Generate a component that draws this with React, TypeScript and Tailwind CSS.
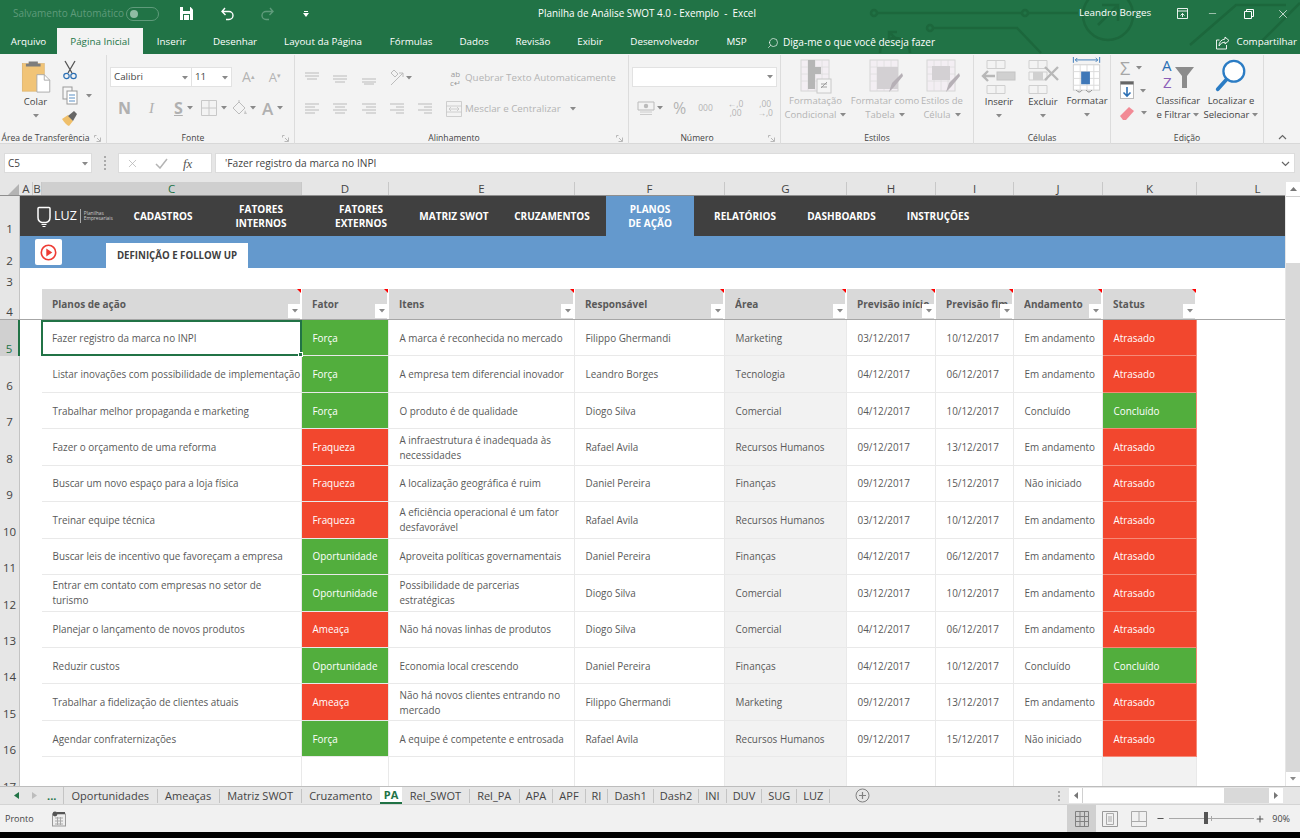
import React from "react";
import { Search, X, Minus, Plus } from "lucide-react";

const GRID = "grid grid-cols-[20px_13px_9px_260px_87px_186px_150px_122px_89px_78px_89px_94px_122px]";

type R = { n: number; a: string; f: string; i: string; r: string; s: string; d1: string; d2: string; and: string; st: string };
const rows: R[] = [
  { n: 5, a: "Fazer registro da marca no INPI", f: "Força", i: "A marca é reconhecida no mercado", r: "Filippo Ghermandi", s: "Marketing", d1: "03/12/2017", d2: "10/12/2017", and: "Em andamento", st: "Atrasado" },
  { n: 6, a: "Listar inovações com possibilidade de implementação", f: "Força", i: "A empresa tem diferencial inovador", r: "Leandro Borges", s: "Tecnologia", d1: "04/12/2017", d2: "06/12/2017", and: "Em andamento", st: "Atrasado" },
  { n: 7, a: "Trabalhar melhor propaganda e marketing", f: "Força", i: "O produto é de qualidade", r: "Diogo Silva", s: "Comercial", d1: "04/12/2017", d2: "10/12/2017", and: "Concluído", st: "Concluído" },
  { n: 8, a: "Fazer o orçamento de uma reforma", f: "Fraqueza", i: "A infraestrutura é inadequada às\nnecessidades", r: "Rafael Avila", s: "Recursos Humanos", d1: "09/12/2017", d2: "13/12/2017", and: "Em andamento", st: "Atrasado" },
  { n: 9, a: "Buscar um novo espaço para a loja física", f: "Fraqueza", i: "A localização geográfica é ruim", r: "Daniel Pereira", s: "Finanças", d1: "09/12/2017", d2: "15/12/2017", and: "Não iniciado", st: "Atrasado" },
  { n: 10, a: "Treinar equipe técnica", f: "Fraqueza", i: "A eficiência operacional é um fator\ndesfavorável", r: "Rafael Avila", s: "Recursos Humanos", d1: "03/12/2017", d2: "10/12/2017", and: "Em andamento", st: "Atrasado" },
  { n: 11, a: "Buscar leis de incentivo que favoreçam a empresa", f: "Oportunidade", i: "Aproveita políticas governamentais", r: "Daniel Pereira", s: "Finanças", d1: "04/12/2017", d2: "06/12/2017", and: "Em andamento", st: "Atrasado" },
  { n: 12, a: "Entrar em contato com empresas no setor de\nturismo", f: "Oportunidade", i: "Possibilidade de parcerias\nestratégicas", r: "Diogo Silva", s: "Comercial", d1: "03/12/2017", d2: "10/12/2017", and: "Em andamento", st: "Atrasado" },
  { n: 13, a: "Planejar o lançamento de novos produtos", f: "Ameaça", i: "Não há novas linhas de produtos", r: "Diogo Silva", s: "Comercial", d1: "04/12/2017", d2: "06/12/2017", and: "Em andamento", st: "Atrasado" },
  { n: 14, a: "Reduzir custos", f: "Oportunidade", i: "Economia local crescendo", r: "Daniel Pereira", s: "Finanças", d1: "04/12/2017", d2: "10/12/2017", and: "Concluído", st: "Concluído" },
  { n: 15, a: "Trabalhar a fidelização de clientes atuais", f: "Ameaça", i: "Não há novos clientes entrando no\nmercado", r: "Filippo Ghermandi", s: "Marketing", d1: "09/12/2017", d2: "13/12/2017", and: "Em andamento", st: "Atrasado" },
  { n: 16, a: "Agendar confraternizações", f: "Força", i: "A equipe é competente e entrosada", r: "Rafael Avila", s: "Recursos Humanos", d1: "09/12/2017", d2: "15/12/2017", and: "Não iniciado", st: "Atrasado" },
];

const GREEN = "bg-[#52ae3d] text-white";
const RED = "bg-[#f2472e] text-white";
const colorOf = (v: string) => (v === "Força" || v === "Oportunidade" || v === "Concluído" ? GREEN : RED);

function Caret({ className = "" }: { className?: string }) {
  return (
    <svg width="6" height="4" viewBox="0 0 6 4" className={className}>
      <path d="M0 0h6L3 3.500z" fill="#8a8a8a" />
    </svg>
  );
}

function Launcher() {
  return (
    <svg width="7" height="7" viewBox="0 0 7 7" className="absolute right-[5px] bottom-[2px]">
      <path d="M0.5 0.5h2M0.5 0.5v2M6.5 6.5h-4M6.5 6.5v-4M3 3l3 3" stroke="#a8a8a8" strokeWidth="0.8" fill="none" />
    </svg>
  );
}

function Group({ w, label, launcher, children }: { w: string; label: string; launcher?: boolean; children?: React.ReactNode }) {
  return (
    <div className={`relative flex flex-col border-r border-[#dcdcdc] h-[89px] ${w}`}>
      <div className="flex-1 flex min-h-0">{children}</div>
      <div className={`h-[11px] text-center text-[8.6px] leading-[11px] text-[#444] whitespace-nowrap ${launcher ? "pr-[15px]" : ""}`}>{label}</div>
      {launcher && <Launcher />}
    </div>
  );
}

function AlignIcon({ lines }: { lines: [number, number, number][] }) {
  return (
    <svg width="16" height="14" viewBox="0 0 16 14">
      {lines.map(([y, a, b], i) => (
        <path key={i} d={`M${a} ${y}H${b}`} stroke="#c4c4c4" strokeWidth="1.2" />
      ))}
    </svg>
  );
}

function Btn3({ w, l1, l2, children }: { w: string; l1: string; l2: string; children: React.ReactNode }) {
  return (
    <div className={`flex flex-col items-center ${w}`}>
      <div className="h-[39px] flex items-start justify-center pt-[4px]">{children}</div>
      <div className="text-[9.5px] leading-[14px] text-center whitespace-nowrap text-[#b4b4b4]">{l1}</div>
      <div className="text-[9.5px] leading-[14px] flex items-center justify-center gap-[4px] whitespace-nowrap text-[#b4b4b4]">
        {l2}
        <Caret />
      </div>
    </div>
  );
}

function StyleIcon({ kind }: { kind: number }) {
  return (
    <svg width="36" height="36" viewBox="0 0 36 36">
      <rect x="3" y="1" width="28" height="31" fill="#f3eef3" stroke="#d6d6d6" />
      <path d="M3 8h28M3 15h28M3 22h28M10 1v31M17 1v31M24 1v31" stroke="#ddd" strokeWidth="0.8" />
      {kind === 0 && <path d="M10 1h7v7h6v7h-6v15h-7z" fill="#b6b6b6" />}
      {kind === 0 && <rect x="19" y="20" width="14" height="14" fill="#f5f5f5" stroke="#c8c8c8" />}
      {kind === 0 && <path d="M23 29l6-6M23 25h6M23 28h6" stroke="#999" strokeWidth="0.9" />}
      {kind === 1 && <rect x="10" y="8" width="21" height="22" fill="#d3d0d3" />}
      {kind === 2 && <rect x="8" y="7" width="18" height="14" fill="#d3d0d3" />}
      {kind > 0 && <path d="M22 33l3-9 10-10 1 3-9 11z" fill="#b6b0b6" />}
    </svg>
  );
}

function Ribbon() {
  return (
    <div className="h-[90px] bg-[#f3f3f3] flex items-start pt-[1px] border-b border-[#d8d8d8]">
      <Group w="w-[107px]" label="Área de Transferência" launcher>
        <div className="w-[58px] flex flex-col items-center pl-[13px] pt-[5px]">
          <svg width="32" height="33" viewBox="0 0 32 36">
            <rect x="1" y="4" width="24" height="30" fill="#f1c477" stroke="#d8a95c" strokeWidth="0.6" />
            <path d="M8 4V1.5h10V4h3v3H5V4z" fill="#7d7d7d" />
            <path d="M17 16h8l6 6v13H17z" fill="#fff" stroke="#a8a8a8" />
            <path d="M25 16v6h6" fill="none" stroke="#a8a8a8" />
          </svg>
          <span className="text-[9.5px] leading-[14px] text-[#444] mt-[2px]">Colar</span>
          <Caret className="mt-[5px]" />
        </div>
        <div className="flex flex-col pl-[4px] pt-[5px] gap-[6px]">
          <svg width="16" height="20" viewBox="0 0 16 20">
            <path d="M3 1l7 12M13 1L6 13" stroke="#555" strokeWidth="1.3" />
            <circle cx="4.5" cy="16" r="2.7" fill="none" stroke="#2b6fb3" strokeWidth="1.2" />
            <circle cx="11.5" cy="16" r="2.7" fill="none" stroke="#2b6fb3" strokeWidth="1.2" />
          </svg>
          <div className="flex items-center gap-[8px]">
            <svg width="16" height="19" viewBox="0 0 16 19">
              <rect x="1" y="1" width="9" height="12" fill="#f6f6f6" stroke="#999" />
              <rect x="5" y="5" width="10" height="13" fill="#fff" stroke="#999" />
              <path d="M7 9h6M7 12h6M7 15h6" stroke="#5a8fc4" />
            </svg>
            <Caret />
          </div>
          <svg width="15" height="16" viewBox="0 0 15 16">
            <path d="M0 8l6-4 5 6-4 5q-3-1-7-7z" fill="#efbf6a" />
            <path d="M6 5l6-5 3 3-4 7z" fill="#666" />
          </svg>
        </div>
      </Group>
      <Group w="w-[188px]" label="Fonte" launcher>
        <div className="flex flex-col pl-[3px] pt-[12px] w-full">
          <div className="flex items-center h-[20px]">
            <div className="w-[82px] h-[20px] pt-[1px] bg-white border border-[#e2e2e2] flex items-center justify-between px-[3px] text-[9.8px] text-[#444]">
              Calibri <Caret />
            </div>
            <div className="w-[40px] h-[20px] pt-[1px] bg-white border border-[#e2e2e2] border-l-0 flex items-center justify-between px-[3px] text-[9.8px] text-[#444]">
              11 <Caret />
            </div>
            <span className="ml-[10px] text-[14px] text-[#b4b4b4] leading-none">A<sup className="text-[7px]">▴</sup></span>
            <span className="ml-[14px] text-[13px] text-[#b4b4b4] leading-none">A<sup className="text-[7px]">▾</sup></span>
          </div>
          <div className="flex items-center h-[20px] mt-[11px] pl-[8px] text-[#b0b0b0]">
            <span className="w-[31px] text-[16px] font-bold leading-none">N</span>
            <span className="w-[25px] text-[15px] italic leading-none font-['Liberation_Serif',serif]">I</span>
            <span className="w-[13px] text-[16px] font-bold underline leading-none">S</span>
            <Caret />
            <svg width="16" height="16" viewBox="0 0 16 16" className="ml-[8px]"><path d="M.5.5h15v15H.5zM8 .5v15M.5 8h15" fill="none" stroke="#c8c8c8" /></svg>
            <Caret className="ml-[4px]" />
            <svg width="16" height="16" viewBox="0 0 16 16" className="ml-[4px]"><path d="M2 8l6-6 6 6-6 6zM8 2V0" fill="none" stroke="#bcbcbc" /><path d="M14 10l2 4h-3z" fill="#c8c8c8" /></svg>
            <Caret className="ml-[3px]" />
            <span className="ml-[6px] text-[17px] font-semibold leading-none">A</span>
            <Caret className="ml-[4px]" />
          </div>
        </div>
      </Group>
      <Group w="w-[334px]" label="Alinhamento" launcher>
        <div className="flex flex-col pl-[9px] pt-[12px] w-full">
          <div className="flex items-center h-[22px]">
            <div className="w-[28px]"><AlignIcon lines={[[2, 1, 15], [5, 1, 15], [8, 3, 13]]} /></div>
            <div className="w-[29px]"><AlignIcon lines={[[5, 1, 15], [8, 1, 15], [11, 3, 13]]} /></div>
            <div className="w-[28px]"><AlignIcon lines={[[8, 1, 15], [11, 1, 15], [13, 3, 13]]} /></div>
            <svg width="16" height="16" viewBox="0 0 16 16"><path d="M2 15L14 3M10 3h4v4M2 3l4 4 3-3-4-4z" fill="none" stroke="#bcbcbc" /></svg>
            <Caret className="ml-[1px]" />
            <div className="ml-[36px] w-[15px] flex flex-col items-center text-[8px] leading-[9px] text-[#9a9a9a]"><span>ab</span><span>c↵</span></div>
            <span className="ml-[2px] text-[9.8px] text-[#b4b4b4] whitespace-nowrap">Quebrar Texto Automaticamente</span>
          </div>
          <div className="flex items-center h-[22px] mt-[9px]">
            <div className="w-[28px]"><AlignIcon lines={[[2, 1, 15], [5, 1, 11], [8, 1, 15], [11, 1, 11]]} /></div>
            <div className="w-[29px]"><AlignIcon lines={[[2, 1, 15], [5, 3, 13], [8, 1, 15], [11, 3, 13]]} /></div>
            <div className="w-[28px]"><AlignIcon lines={[[2, 1, 15], [5, 5, 15], [8, 1, 15], [11, 5, 15]]} /></div>
            <div className="w-[28px]"><AlignIcon lines={[[2, 1, 15], [5, 7, 15], [8, 1, 15], [11, 7, 15]]} /></div>
            <div className="w-[28px]"><AlignIcon lines={[[2, 1, 15], [5, 7, 15], [8, 1, 15], [11, 7, 15]]} /></div>
            <svg width="16" height="16" viewBox="0 0 16 16" className="ml-[1px]"><path d="M.5.5h15v15H.5zM.5 5h15M.5 11h15M3 8h10M3 8l2-2M3 8l2 2M13 8l-2-2M13 8l-2 2" fill="none" stroke="#c4c4c4" strokeWidth="0.8" /></svg>
            <span className="ml-[3px] text-[9.8px] text-[#b4b4b4] whitespace-nowrap">Mesclar e Centralizar</span>
            <Caret className="ml-[9px]" />
          </div>
        </div>
      </Group>
      <Group w="w-[152px]" label="Número" launcher>
        <div className="flex flex-col pl-[3px] pt-[12px] w-full">
          <div className="w-[145px] h-[20px] bg-white border border-[#e2e2e2] flex items-center justify-end pr-[3px]"><Caret /></div>
          <div className="flex items-center h-[20px] mt-[11px] pl-[5px] text-[#b4b4b4]">
            <svg width="18" height="15" viewBox="0 0 18 15"><path d="M1 1h16v8H1z" fill="none" stroke="#bbb" /><circle cx="9" cy="5" r="2.2" fill="#bbb" /><path d="M3 11h12M3 13.5h12" stroke="#ccc" /></svg>
            <Caret className="ml-[2px]" />
            <span className="ml-[10px] text-[16px] leading-none">%</span>
            <span className="ml-[12px] text-[8.5px]">000</span>
            <span className="ml-[15px] text-[8.5px] leading-[9px] text-center">←,0<br />,00</span>
            <span className="ml-[14px] text-[8.5px] leading-[9px] text-center">,00<br />→,0</span>
          </div>
        </div>
      </Group>
      <Group w="w-[193px]" label="Estilos">
        <div className="flex pl-[4px] w-full">
          <Btn3 w="w-[61px]" l1="Formatação" l2="Condicional"><StyleIcon kind={0} /></Btn3>
          <Btn3 w="w-[70px] ml-[4px]" l1="Formatar como" l2="Tabela"><StyleIcon kind={1} /></Btn3>
          <Btn3 w="w-[44px]" l1="Estilos de" l2="Célula"><StyleIcon kind={2} /></Btn3>
        </div>
      </Group>
      <Group w="w-[137px]" label="Células">
        <div className="flex pl-[3px] w-full">
          <div className="w-[44px] flex flex-col items-center">
            <svg width="36" height="36" viewBox="0 0 36 36" className="mt-[4px]">
              <path d="M6 1.5h18v8H6zM15 1.5v8M6 26.5h18v8H6zM15 26.5v8" fill="none" stroke="#cfcfcf" />
              <rect x="16" y="13" width="18" height="8" fill="#d0d0d0" stroke="#c4c4c4" />
              <path d="M14 17H2M7 12l-5 5 5 5" fill="none" stroke="#b8b8b8" strokeWidth="2.4" />
            </svg>
            <span className="text-[9.5px] leading-[14px] text-[#444]">Inserir</span>
            <Caret className="mt-[5px]" />
          </div>
          <div className="w-[44px] flex flex-col items-center">
            <svg width="36" height="36" viewBox="0 0 36 36" className="mt-[4px]">
              <path d="M4 1.5h18v8H4zM13 1.5v8M4 26.5h18v8H4zM13 26.5v8M4 13h18v8H4z" fill="none" stroke="#cfcfcf" />
              <rect x="8" y="13" width="10" height="8" fill="#d0d0d0" />
              <path d="M20 8l13 13M33 8L20 21" stroke="#b8b8b8" strokeWidth="2.4" />
            </svg>
            <span className="text-[9.5px] leading-[14px] text-[#444]">Excluir</span>
            <Caret className="mt-[5px]" />
          </div>
          <div className="w-[44px] flex flex-col items-center">
            <svg width="34" height="37" viewBox="0 0 34 38" className="mt-[2px]">
              <path d="M3 0v6M30 0v6M5 3h23M5 3l2-2M5 3l2 2M28 3l-2-2M28 3l-2 2" stroke="#2b6fb3" fill="none" strokeWidth="0.9" />
              <rect x="3" y="8" width="27" height="26" fill="#fff" stroke="#cfcfcf" />
              <path d="M3 15h27M3 22h27M3 29h27M10 8v26M17 8v26M24 8v26" stroke="#dcdcdc" />
              <rect x="11" y="15" width="9" height="13" fill="#3f78b8" />
              <path d="M6 34q3 4 6 0M16 34q3 4 6 0" fill="none" stroke="#888" />
            </svg>
            <span className="text-[9.5px] leading-[14px] text-[#444]">Formatar</span>
            <Caret className="mt-[5px]" />
          </div>
        </div>
      </Group>
      <Group w="w-[153px]" label="Edição">
        <div className="flex w-full">
          <div className="flex flex-col pl-[9px] w-[44px] pt-[4px] gap-[5px]">
            <div className="flex items-center gap-[6px] h-[17px]"><span className="text-[18px] leading-none text-[#a6a6a6]">Σ</span><Caret /></div>
            <div className="flex items-center gap-[3px] h-[19px]">
              <svg width="17" height="19" viewBox="0 0 17 19"><rect x=".5" y=".5" width="13" height="17" fill="#fff" stroke="#bbb" /><rect x=".5" y=".5" width="13" height="3" fill="#666" /><path d="M7 6v9M3.5 11.5L7 15l3.5-3.5" stroke="#2b6fb3" strokeWidth="1.6" fill="none" /></svg>
              <Caret />
            </div>
            <div className="flex items-center gap-[6px] h-[16px]">
              <svg width="15" height="15" viewBox="0 0 15 15"><path d="M0 10L9 1l5 4-8 9H3z" fill="#f28a95" /></svg>
              <Caret />
            </div>
          </div>
          <div className="w-[46px] flex flex-col items-center">
            <div className="relative w-[36px] h-[36px] mt-[3px]">
              <span className="absolute left-[2px] top-[-1px] text-[15px] leading-[17px] text-[#2b6fb3]">A</span>
              <span className="absolute left-[3px] top-[16px] text-[15px] leading-[17px] text-[#8c5eb8]">Z</span>
              <svg width="22" height="24" viewBox="0 0 22 24" className="absolute left-[14px] top-[8px]"><path d="M1 1h19l-7 9v12H8V10z" fill="#8c8c8c" /></svg>
            </div>
            <span className="text-[9.5px] leading-[14px] text-[#444]">Classificar</span>
            <span className="text-[9.5px] leading-[14px] text-[#444] flex items-center gap-[3px] whitespace-nowrap">e Filtrar <Caret /></span>
          </div>
          <div className="w-[56px] ml-[2px] flex flex-col items-center">
            <svg width="36" height="36" viewBox="0 0 36 38" className="mt-[3px]">
              <circle cx="21" cy="14" r="11" fill="#fff" stroke="#2b7cc4" strokeWidth="2.4" />
              <path d="M13 23L4 33" stroke="#2b7cc4" strokeWidth="4" strokeLinecap="round" />
            </svg>
            <span className="text-[9.5px] leading-[14px] text-[#444] whitespace-nowrap">Localizar e</span>
            <span className="text-[9.5px] leading-[14px] text-[#444] flex items-center gap-[3px] whitespace-nowrap">Selecionar <Caret /></span>
          </div>
        </div>
      </Group>
      <div className="flex-1 h-[88px] flex items-end justify-center pb-[3px]">
        <svg width="9" height="6" viewBox="0 0 9 6"><path d="M1 5l3.5-3.5L8 5" fill="none" stroke="#666" strokeWidth="1.2" /></svg>
      </div>
    </div>
  );
}

function Head({ t }: { t: string }) {
  return (
    <div className="relative h-[30px] bg-[#d9d9d9] border-r-2 border-white flex items-center pl-[10px] pt-[1px] text-[10px] font-bold text-[#595959] whitespace-nowrap">
      <span className="block w-full overflow-hidden">{t}</span>
      <span className="absolute -right-[1px] top-0 w-0 h-0 border-t-[4px] border-l-[4px] border-t-[#ff0000] border-l-transparent" />
      <span className="absolute -right-[2px] bottom-[1px] w-[14px] h-[14px] bg-white flex items-center justify-center">
        <Caret />
      </span>
    </div>
  );
}

function RowNum({ n, sel }: { n: number; sel?: boolean }) {
  return (
    <div className={`flex items-end justify-center pb-[1px] text-[11.5px] leading-[13px] ${sel ? "bg-[#d0d0d0] text-[#217346] border-r-2 border-[#217346]" : "bg-[#e6e6e6] text-[#444] border-r border-[#c4c4c4]"}`}>
      {n}
    </div>
  );
}

function Cell({ children, className = "" }: { children?: React.ReactNode; className?: string }) {
  return (
    <div className={`flex items-center pl-[10.5px] pt-[1px] text-[9.9px] leading-[15px] whitespace-pre border-r border-b border-[#e9e9e9] ${className}`}>
      {children}
    </div>
  );
}

function Nav({ w, t, active }: { w: string; t: string; active?: boolean }) {
  return (
    <div className={`${w} h-full flex items-center justify-center text-center text-white text-[10px] font-bold leading-[14px] whitespace-pre ${active ? "bg-[#6499cd]" : ""}`}>
      {t}
    </div>
  );
}

function Sheet() {
  const cols = ["C", "D", "E", "F", "G", "H", "I", "J", "K", "L"];
  return (
    <div className="relative w-[1285px] h-[604px] overflow-hidden bg-white">
      {/* column header */}
      <div className={`${GRID} h-[13px] bg-[#e6e6e6] text-[11.5px] leading-[13px] text-[#444] text-center`}>
        <div className="flex items-end justify-end pr-[1px]">
          <span className="w-0 h-0 border-b-[11px] border-l-[11px] border-b-[#b4b4b4] border-l-transparent" />
        </div>
        <div className="border-r border-[#c8c8c8]">A</div>
        <div className="border-r border-[#c8c8c8]">B</div>
        {cols.map((c) => (
          <div key={c} className={`border-r border-[#c8c8c8] ${c === "C" ? "bg-[#cfcfcf] text-[#217346]" : ""}`}>{c}</div>
        ))}
      </div>
      {/* row 1 */}
      <div className={`${GRID} h-[41px] border-t border-[#8f8f8f]`}>
        <RowNum n={1} />
        <div className="col-span-12 bg-[#404040] flex items-center">
          <div className="w-[100px] h-full flex items-center pl-[16px] gap-[2px] text-white shrink-0">
            <svg width="16" height="21" viewBox="0 0 16 21" className="shrink-0">
              <path d="M2 2.500q0-1 1-1h10q1 0 1 1v9q0 4-4 5H6q-4-1-4-5z" fill="none" stroke="#fff" strokeWidth="1.5" />
              <path d="M5.500 18.500h5M6.500 20.500h3" stroke="#fff" strokeWidth="1" />
            </svg>
            <span className="text-[12.5px] leading-none font-normal">LUZ</span>
            <span className="ml-[1px] w-px h-[14px] bg-[#aaa]" />
            <span className="ml-[1px] text-[4.8px] leading-[5.5px] text-[#ccc] whitespace-nowrap">Planilhas<br />Empresariais</span>
          </div>
          <Nav w="w-[86px]" t="CADASTROS" />
          <Nav w="w-[110px]" t={"FATORES\nINTERNOS"} />
          <Nav w="w-[90px]" t={"FATORES\nEXTERNOS"} />
          <Nav w="w-[96px]" t="MATRIZ SWOT" />
          <Nav w="w-[100px] mr-[4px]" t="CRUZAMENTOS" />
          <Nav w="w-[88px]" t={"PLANOS\nDE AÇÃO"} active />
          <Nav w="w-[102px]" t="RELATÓRIOS" />
          <Nav w="w-[91px]" t="DASHBOARDS" />
          <Nav w="w-[102px]" t="INSTRUÇÕES" />
        </div>
      </div>
      {/* row 2 */}
      <div className={`${GRID} h-[32px]`}>
        <RowNum n={2} />
        <div className="col-span-12 bg-[#6499cd] flex items-end">
          <div className="ml-[15px] mb-[3px] w-[27px] h-[26px] bg-white rounded-[2px] flex items-center justify-center">
            <svg width="17" height="17" viewBox="0 0 17 17">
              <circle cx="8.500" cy="8.500" r="7.200" fill="none" stroke="#ee3b34" strokeWidth="1.6" />
              <path d="M6.300 4.600l6 3.900-6 3.900z" fill="#ee3b34" />
            </svg>
          </div>
          <div className="ml-[44px] w-[142px] h-[25px] pt-[1px] bg-white flex items-center justify-center text-[9.7px] font-bold text-[#404040] whitespace-nowrap">
            DEFINIÇÃO E FOLLOW UP
          </div>
        </div>
      </div>
      {/* row 3 */}
      <div className={`${GRID} h-[21px]`}>
        <RowNum n={3} />
      </div>
      {/* row 4 */}
      <div className={`${GRID} h-[31px] border-b border-[#a6a6a6]`}>
        <RowNum n={4} />
        <div />
        <div />
        {["Planos de ação", "Fator", "Itens", "Responsável", "Área", "Previsão início", "Previsão fim", "Andamento", "Status"].map((t) => (
          <Head key={t} t={t} />
        ))}
      </div>
      {/* data rows */}
      {rows.map((r) => (
        <div key={r.n} className={`${GRID} h-[36.45px] text-[#595959]`}>
          <RowNum n={r.n} sel={r.n === 5} />
          <div />
          <div />
          {r.n === 5 ? (
            <div className="relative flex items-center pl-[9px] text-[9.9px] border-2 border-[#217346] whitespace-pre -ml-[1px]">
              {r.a}
              <span className="absolute -right-[3px] -bottom-[3px] w-[5px] h-[5px] bg-[#217346] border border-white" />
            </div>
          ) : (
            <Cell>{r.a}</Cell>
          )}
          <Cell className={`${colorOf(r.f)} border-[#7cc16b]`}>{r.f}</Cell>
          <Cell>{r.i}</Cell>
          <Cell>{r.r}</Cell>
          <Cell className="bg-[#f2f2f2]">{r.s}</Cell>
          <Cell>{r.d1}</Cell>
          <Cell>{r.d2}</Cell>
          <Cell>{r.and}</Cell>
          <Cell className={`${colorOf(r.st)} border-[#f58a78]`}>{r.st}</Cell>
        </div>
      ))}
      {/* row 17 */}
      <div className={`${GRID} h-[36.45px]`}>
        <RowNum n={17} />
        <div />
        <div />
        <Cell />
        <Cell />
        <Cell />
        <Cell />
        <Cell className="bg-[#f2f2f2]" />
        <Cell />
        <Cell />
        <Cell />
        <Cell className="bg-[#f2f2f2]" />
      </div>
    </div>
  );
}

function VScroll() {
  return (
    <div className="w-[15px] h-[604px] bg-[#d9d9d9] flex flex-col border-l border-[#e6e6e6]">
      <div className="h-[15px] bg-white border-b border-[#d0d0d0] flex items-center justify-center">
        <svg width="7" height="4" viewBox="0 0 7 4"><path d="M0 4l3.500-4L7 4z" fill="#777" /></svg>
      </div>
      <div className="h-[66px] bg-white" />
      <div className="flex-1" />
      <div className="h-[14px] bg-white flex items-center justify-center">
        <Caret />
      </div>
    </div>
  );
}

const TABS_A = ["Oportunidades", "Ameaças", "Matriz SWOT", "Cruzamento"];
const TABS_B = ["Rel_SWOT", "Rel_PA"];
const TABS_C = ["APA", "APF", "RI", "Dash1", "Dash2", "INI", "DUV", "SUG", "LUZ"];

function SheetTabs() {
  return (
    <div className="h-[18px] bg-[#e6e6e6] border-t border-[#bdbdbd] flex items-center text-[11px] text-[#444]">
      <div className="w-[64px] h-full flex items-center border-r border-[#c4c4c4] shrink-0 pl-[14px]">
        <svg width="5" height="7" viewBox="0 0 5 7"><path d="M5 0v7L0 3.500z" fill="#217346" /></svg>
        <svg width="5" height="7" viewBox="0 0 5 7" className="ml-[13px]"><path d="M0 0v7l5-3.500z" fill="#bdbdbd" /></svg>
        <span className="ml-[10px] text-[#217346] font-bold leading-none">...</span>
      </div>
      {TABS_A.map((t) => (
        <div key={t} className="h-[14px] px-[7.5px] border-r border-[#c4c4c4] leading-[14px] whitespace-nowrap shrink-0">{t}</div>
      ))}
      <div className="h-full px-[4px] -ml-px bg-white border-b-2 border-[#217346] text-[#217346] font-bold leading-[15px] shrink-0">PA</div>
      {TABS_B.map((t) => (
        <div key={t} className="h-[14px] px-[7.5px] border-r border-[#c4c4c4] leading-[14px] whitespace-nowrap shrink-0">{t}</div>
      ))}
      {TABS_C.map((t) => (
        <div key={t} className="h-[14px] px-[6px] border-r border-[#c4c4c4] leading-[14px] whitespace-nowrap shrink-0">{t}</div>
      ))}
      <svg width="15" height="15" viewBox="0 0 15 15" className="ml-[25px] shrink-0">
        <circle cx="7.500" cy="7.500" r="6.500" fill="none" stroke="#808080" />
        <path d="M7.500 4v7M4 7.500h7" stroke="#808080" strokeWidth="1.2" />
      </svg>
      <div className="ml-auto flex items-center h-full pr-[17px]">
        <div className="flex flex-col gap-[2px] mr-[9px]">
          <span className="w-[2px] h-[2px] bg-[#aaa]" />
          <span className="w-[2px] h-[2px] bg-[#aaa]" />
          <span className="w-[2px] h-[2px] bg-[#aaa]" />
        </div>
        <div className="w-[214px] h-[15px] bg-[#d9d9d9] flex">
          <div className="w-[14px] bg-white flex items-center justify-center border-r border-[#d0d0d0]">
            <svg width="4" height="7" viewBox="0 0 4 7"><path d="M4 0v7L0 3.500z" fill="#777" /></svg>
          </div>
          <div className="w-[141px] bg-white" />
          <div className="flex-1" />
          <div className="w-[14px] bg-white flex items-center justify-center">
            <svg width="4" height="7" viewBox="0 0 4 7"><path d="M0 0v7l4-3.500z" fill="#777" /></svg>
          </div>
        </div>
      </div>
    </div>
  );
}

function StatusBar() {
  return (
    <div className="h-[28px] bg-[#f1f1f1] border-t border-[#d4d4d4] flex items-center text-[9px] text-[#444]">
      <span className="ml-[5px]">Pronto</span>
      <svg width="14" height="16" viewBox="0 0 14 16" className="ml-[18px]">
        <rect x=".5" y="3" width="13" height="12" fill="#eee" stroke="#999" />
        <circle cx="3" cy="3" r="2.400" fill="#555" />
        <path d="M5 2h8" stroke="#555" strokeWidth="2" />
        <path d="M3 7h8M3 10h8M3 13h8M5.500 6v8M8.500 6v8" stroke="#aaa" />
      </svg>
      <div className="ml-auto flex items-center h-full">
        <div className="w-[29px] h-full bg-[#d0d0d0] flex items-center justify-center">
          <svg width="14" height="16" viewBox="0 0 14 16"><path d="M.5.5h13v15H.5zM.5 5.500h13M.5 10.500h13M5 .5v15M9.500 .5v15" fill="none" stroke="#808080" /></svg>
        </div>
        <svg width="16" height="16" viewBox="0 0 16 16" className="ml-[6px]"><path d="M.5.5h15v15H.5z" fill="none" stroke="#999" /><path d="M4.500 2.500h7v11h-7zM6 6h4M6 8h4M6 10h4" fill="none" stroke="#aaa" /></svg>
        <svg width="16" height="16" viewBox="0 0 16 16" className="ml-[13px]"><path d="M.5.5h15v15H.5zM.5 10.500h15M8 .5v10" fill="none" stroke="#aaa" /></svg>
        <Minus size={9} strokeWidth={3} className="ml-[9px] text-[#555]" />
        <div className="relative ml-[4px] w-[85px] h-px bg-[#a8a8a8]">
          <span className="absolute left-[35px] -top-[6px] w-[4px] h-[12px] bg-[#555]" />
          <span className="absolute left-[42px] -top-[2px] w-px h-[5px] bg-[#a8a8a8]" />
        </div>
        <Plus size={10} strokeWidth={2.500} className="ml-[1px] text-[#555]" />
        <span className="ml-[7px] mr-[10px]">90%</span>
      </div>
    </div>
  );
}

function Circuit() {
  return (
    <svg width="440" height="54" viewBox="0 0 440 54" className="absolute right-0 top-0 pointer-events-none">
      <g fill="none" stroke="#1c673c" strokeWidth="2.500">
        <circle cx="14" cy="13" r="3" />
        <path d="M17 13h145" />
        <circle cx="165" cy="13" r="3" />
        <path d="M168 13h50" />
        <path d="M20 53a15 15 0 1 1 30 0" />
        <path d="M43 46L29 32M29 40v-8h8" />
        <circle cx="70" cy="28" r="3" />
        <path d="M73 28h84l24 25" />
        <circle cx="248" cy="15" r="25" />
        <path d="M238 25l20-20M242 5h16v16" />
        <path d="M330 45l46-40h50" />
        <path d="M398 45l42-42" />
      </g>
    </svg>
  );
}

function TitleBar() {
  return (
    <div className="relative h-[27px] flex items-center text-[9.8px] text-white">
      <span className="ml-[13px] text-[#5f9b7b] text-[10px] whitespace-nowrap">Salvamento Automático</span>
      <div className="ml-[2px] w-[33px] h-[14px] rounded-full border border-[#5f9b7b] flex items-center pl-[3px]">
        <span className="w-[8px] h-[8px] rounded-full bg-[#8fbba3]" />
      </div>
      <svg width="13" height="13" viewBox="0 0 13 13" className="ml-[21px]">
        <path d="M0 0h10.500L13 2.500V13H0z" fill="#fff" />
        <rect x="3" y="0" width="7" height="4" fill="#217346" />
        <rect x="3" y="7" width="7" height="6" fill="#217346" />
        <rect x="4" y="8" width="5" height="5" fill="#fff" />
      </svg>
      <svg width="13" height="14" viewBox="0 0 13 14" className="ml-[28px]">
        <path d="M4 1L1 4.500 4.500 8M1.500 4.500H8a4 4 0 0 1 0 8H5" fill="none" stroke="#fff" strokeWidth="1.400" />
      </svg>
      <svg width="13" height="14" viewBox="0 0 13 14" className="ml-[27px]">
        <path d="M9 1l3 3.500L8.500 8M11.500 4.500H5a4 4 0 0 0 0 8h3" fill="none" stroke="#5f9b7b" strokeWidth="1.400" />
      </svg>
      <svg width="6" height="6" viewBox="0 0 6 6" className="ml-[29px]"><path d="M1 0h4v1H1zM0 2h6L3 6z" fill="#fff" /></svg>
      <span className="absolute left-[538px] top-[5px] leading-[16px] whitespace-pre text-[9.9px]">Planilha de Análise SWOT 4.0 - Exemplo  -  Excel</span>
      <span className="absolute left-[1079px] top-[5px] leading-[16px] whitespace-nowrap">Leandro Borges</span>
      <div className="ml-auto flex items-center h-full z-10">
        <svg width="11" height="11" viewBox="0 0 11 11"><path d="M.5.5h10v10H.5zM.5 3h10M3.500 7.500L5.500 5.500l2 2M5.500 5.500V9" fill="none" stroke="#fff" strokeWidth="0.9" /></svg>
        <Minus size={11} strokeWidth={1.200} className="ml-[19px]" />
        <svg width="10" height="10" viewBox="0 0 10 10" className="ml-[26px]"><path d="M.5 2.500h7v7h-7zM2.500 2.500v-2h7v7h-2" fill="none" stroke="#fff" /></svg>
        <X size={14} strokeWidth={1.200} className="ml-[22px] mr-[10px]" />
      </div>
    </div>
  );
}

function MenuTabs() {
  const items: [string, string][] = [
    ["w-[57px]", "Arquivo"],
    ["w-[86px]", "Página Inicial"],
    ["w-[57px]", "Inserir"],
    ["w-[70px]", "Desenhar"],
    ["w-[106px]", "Layout da Página"],
    ["w-[70px]", "Fórmulas"],
    ["w-[56px]", "Dados"],
    ["w-[62px]", "Revisão"],
    ["w-[52px]", "Exibir"],
    ["w-[97px]", "Desenvolvedor"],
    ["w-[47px]", "MSP"],
  ];
  return (
    <div className="relative h-[27px] flex items-end text-[9.8px] text-white">
      {items.map(([w, t]) =>
        t === "Página Inicial" ? (
          <div key={t} className={`${w} h-[26px] pt-[2px] bg-[#f3f3f3] text-[#217346] flex items-center justify-center whitespace-nowrap`}>{t}</div>
        ) : (
          <div key={t} className={`${w} h-[26px] pt-[2px] flex items-center justify-center whitespace-nowrap`}>{t}</div>
        )
      )}
      <div className="h-[26px] pt-[3px] flex items-center ml-[7px] gap-[4px] text-[10.1px]">
        <Search size={12} strokeWidth={1.300} className="-scale-x-100" />
        <span className="whitespace-nowrap">Diga-me o que você deseja fazer</span>
      </div>
      <div className="ml-auto h-[26px] pt-[3px] flex items-center gap-[7px] pr-[3px]">
        <svg width="14" height="14" viewBox="0 0 14 14"><path d="M9 1l4 3.500L9 8V6Q5 6 3 10q0-6 6-7zM10.500 9v4H.5V4h3" fill="none" stroke="#fff" strokeWidth="0.9" /></svg>
        <span className="whitespace-nowrap">Compartilhar</span>
      </div>
    </div>
  );
}

function FormulaBar() {
  return (
    <div className="h-[38px] bg-[#e6e6e6] flex items-start pt-[9px] text-[10px] text-[#444]">
      <div className="ml-[4px] w-[88px] h-[20px] pt-[1px] bg-white border border-[#dcdcdc] flex items-center justify-between px-[3px]">
        C5 <Caret />
      </div>
      <div className="ml-[12px] w-[2px] h-[14px] mt-[3px] border-l-2 border-dotted border-[#aaa]" />
      <div className="ml-[12px] w-[94px] h-[20px] bg-white border border-[#dcdcdc] flex items-center text-[#b4b4b4]">
        <X size={13} strokeWidth={1.400} className="ml-[7px]" />
        <svg width="13" height="11" viewBox="0 0 13 11" className="ml-[16px]"><path d="M1 6l4 4 7-9" fill="none" stroke="#b4b4b4" strokeWidth="1.500" /></svg>
        <span className="ml-[15px] italic text-[13px] leading-none text-[#555] font-['Liberation_Serif',serif]">fx</span>
      </div>
      <div className="ml-[3px] flex-1 mr-[5px] h-[20px] pt-[1px] bg-white border border-[#dcdcdc] flex items-center justify-between pl-[9px] pr-[4px] text-[10.2px]">
        'Fazer registro da marca no INPI
        <svg width="9" height="6" viewBox="0 0 9 6"><path d="M1 1l3.500 3.500L8 1" fill="none" stroke="#666" strokeWidth="1.200" /></svg>
      </div>
    </div>
  );
}

export default function App() {
  return (
    <div className="w-[1300px] h-[838px] overflow-hidden bg-black flex flex-col font-['Open_Sans','Noto_Sans',sans-serif]">
      <div className="relative bg-[#217346] h-[54px] shrink-0">
        <Circuit />
        <TitleBar />
        <MenuTabs />
      </div>
      <Ribbon />
      <FormulaBar />
      <div className="flex h-[604px] shrink-0">
        <Sheet />
        <VScroll />
      </div>
      <SheetTabs />
      <StatusBar />
    </div>
  );
}
